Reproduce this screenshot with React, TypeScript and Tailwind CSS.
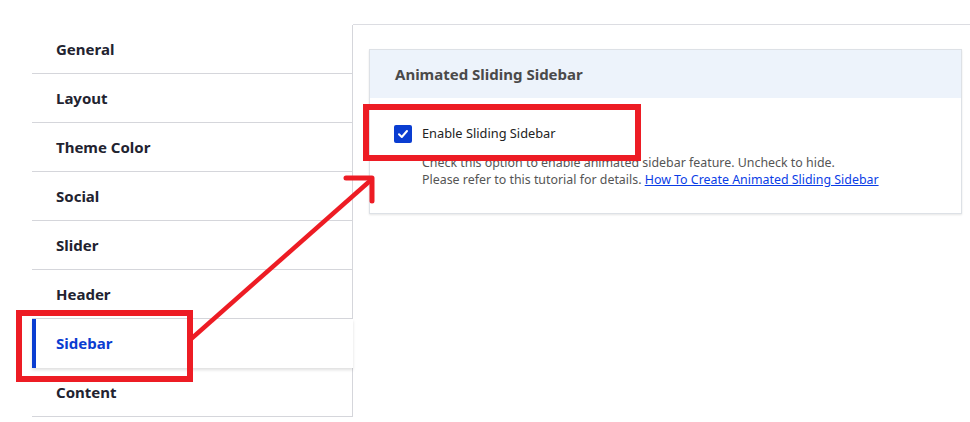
import React from "react";

const items = ["General", "Layout", "Theme Color", "Social", "Slider", "Header", "Sidebar", "Content"];

export default function App() {
  return (
    <div className="relative w-[970px] h-[422px] overflow-hidden bg-white font-['Noto_Sans',sans-serif]">
      <div className="flex pt-6 pl-8">
        <nav className="w-[321px] shrink-0 flex flex-col mt-px">
          {items.map((it) =>
            it === "Sidebar" ? (
              <div
                key={it}
                className="relative z-10 h-[49px] flex items-center pl-5 border-l-4 border-[#0a3dd1] bg-white shadow-[0_2px_3px_rgba(0,0,0,0.13)] text-[15px] font-bold text-[#0a3dd1]"
              >
                {it}
              </div>
            ) : (
              <div
                key={it}
                className="h-[49px] flex items-center pl-6 border-b border-r border-[#d5d6db] text-[15px] font-bold text-[#222330]"
              >
                {it}
              </div>
            )
          )}
        </nav>
        <div className="flex-1 h-[398px] border-t border-[#dcdde2] pt-6 pl-4">
          <div className="w-[593px] border border-[#dde1e6] shadow-[0_1px_2px_rgba(0,0,0,0.1)] bg-white">
            <div className="h-[48px] flex items-center pl-[25px] bg-[#edf3fb] text-[15px] font-bold text-[#4a4a4a]">
              Animated Sliding Sidebar
            </div>
            <div className="pt-[27px] pb-[25px] pl-6">
              <div className="flex items-center gap-[10px] h-[18px]">
                <div className="w-[18px] h-[18px] rounded-[2px] bg-[#0a3dd1] flex items-center justify-center">
                  <svg width="12" height="12" viewBox="0 0 12 12">
                    <path d="M2 6.3 L4.8 9 L10 3" fill="none" stroke="white" strokeWidth="2" strokeLinecap="round" strokeLinejoin="round" />
                  </svg>
                </div>
                <span className="text-[12.8px] text-[#222]">Enable Sliding Sidebar</span>
              </div>
              <div className="mt-[11px] pl-[28px] text-[12.4px] leading-[17px] text-[#555]">
                <div>Check this option to enable animated sidebar feature. Uncheck to hide.</div>
                <div>
                  Please refer to this tutorial for details.{" "}
                  <a href="#" className="text-[#0a3de6] underline">How To Create Animated Sliding Sidebar</a>
                </div>
              </div>
            </div>
          </div>
        </div>
      </div>

      {/* annotations */}
      <div className="absolute z-20 left-[16px] top-[310px] w-[177px] h-[72px] border-[6px] border-[#ed1c24]" />
      <div className="absolute z-20 left-[363px] top-[104px] w-[278px] h-[57px] border-[6px] border-[#ed1c24]" />
      <svg className="absolute z-20 left-0 top-0" width="970" height="422" viewBox="0 0 970 422">
        <line x1="191" y1="339" x2="371" y2="180" stroke="#ed1c24" strokeWidth="4.5" />
        <path d="M346 178 L372 178 L372 201" fill="none" stroke="#ed1c24" strokeWidth="5" strokeLinecap="round" strokeLinejoin="round" />
      </svg>
    </div>
  );
}
